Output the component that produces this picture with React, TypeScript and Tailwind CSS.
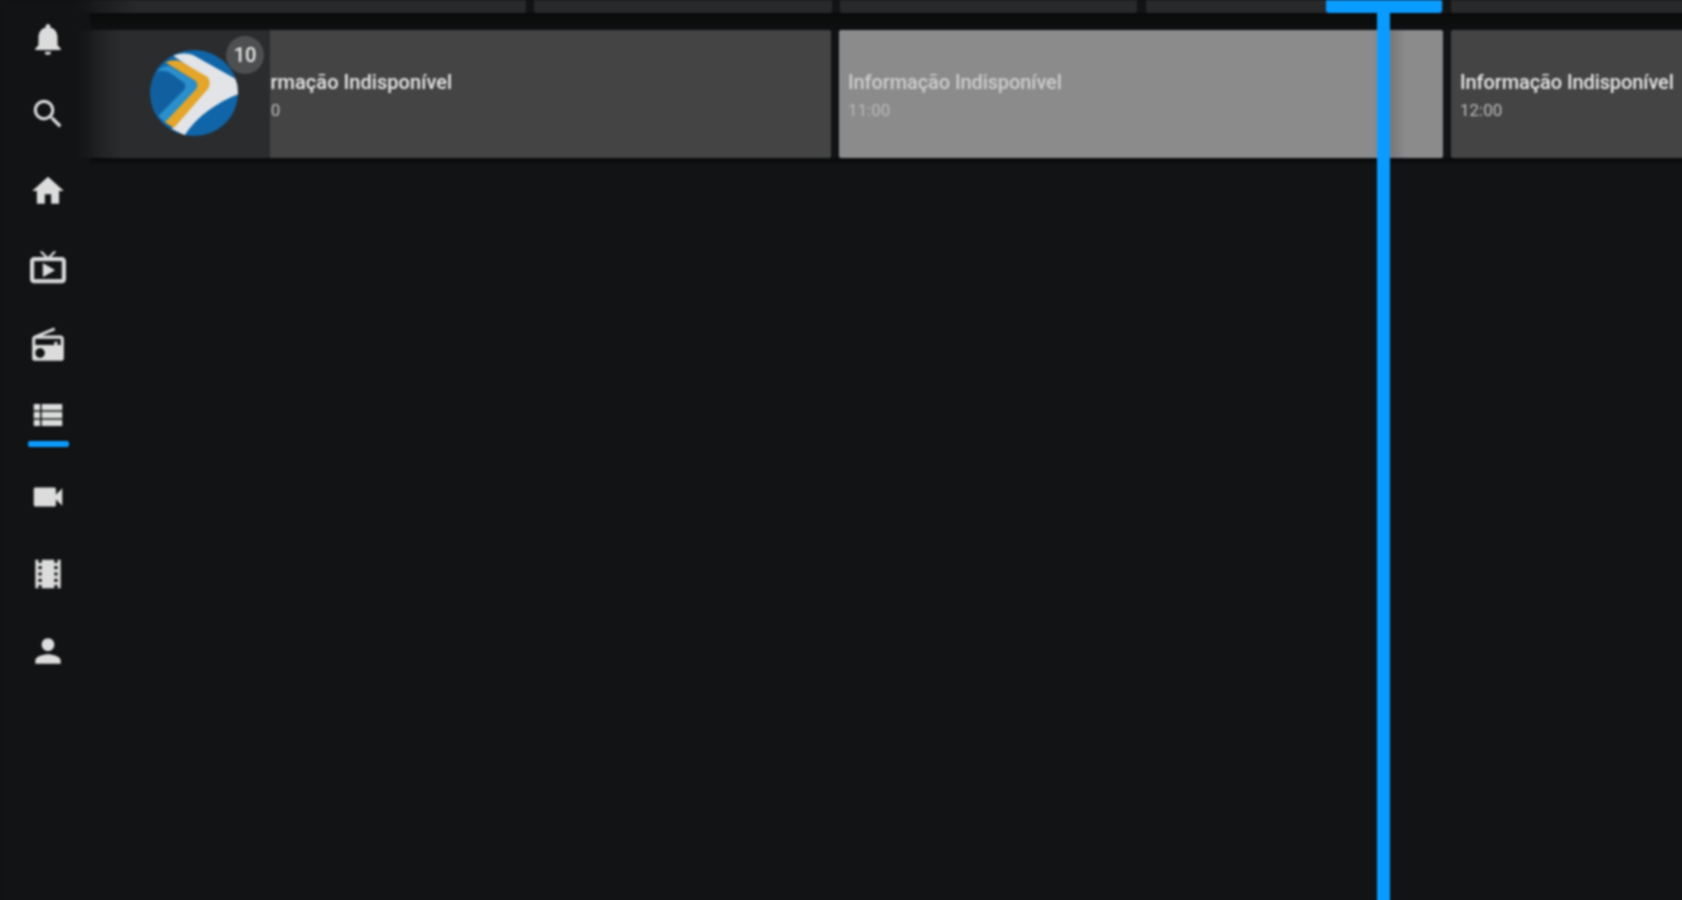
import { MdNotifications, MdSearch, MdHome, MdRadio, MdViewList, MdVideocam, MdLocalMovies, MdPerson } from "react-icons/md";

function Logo() {
  return (
    <svg viewBox="58 75 272 257" preserveAspectRatio="none" className="w-[88px] h-[86px]">
      <defs>
        <clipPath id="c"><ellipse cx="194" cy="203.5" rx="136" ry="128.5" /></clipPath>
      </defs>
      <g clipPath="url(#c)">
        <rect x="58" y="75" width="272" height="257" fill="#0f65a8" />
        <path d="M130 92 C150 84 175 82 195 92 L335 168 L335 205 C270 230 205 268 165 330 L125 310 L235 190 L238 165 Z" fill="#e2e4e8" />
        <path d="M106 112 C125 104 140 104 155 110 L236 156 C244 165 244 180 238 190 L132 308 L103 290 L200 190 C206 180 204 172 196 166 Z" fill="#e3a52a" />
        <path d="M78 138 C95 125 108 120 122 124 L196 166 C206 174 206 184 200 192 L104 292 L84 272 L165 192 C170 184 168 176 160 170 L118 142 C105 136 92 136 78 138 Z" fill="#2a8fcb" />
        <path d="M70 150 C95 138 110 140 122 148 L158 172 C165 178 165 186 160 192 L85 268 C70 250 60 225 58 200 Z" fill="#125f9f" />
      </g>
    </svg>
  );
}

function TvIcon({ size }: { size: number }) {
  return (
    <svg viewBox="0 0 24 24" width={size} height={size} fill="currentColor" stroke="currentColor" strokeWidth={0.6}>
      <path d="M21 6h-7.59l3.3-3.29L16 2l-4 4-4-4-.71.71L10.59 6H3c-1.1 0-2 .89-2 2v12c0 1.1.9 2 2 2h18c1.1 0 2-.9 2-2V8c0-1.11-.9-2-2-2zm0 14H3V8h18v12zM9 10v8l7-4z" />
    </svg>
  );
}

function Card({ time, highlighted, clipped }: { time: string; highlighted?: boolean; clipped?: boolean }) {
  return (
    <div className={`h-full flex flex-col justify-center pl-[9px] pt-[2px] rounded-[2px] ${highlighted ? "bg-[#8b8b8b] text-[#cdcdcd]" : "bg-[#444444] text-[#e6e6e6]"}`}>
      <div className={`text-[20px] leading-[28px] whitespace-nowrap font-medium ${clipped ? "ml-[-3px] tracking-[0.05px]" : "tracking-[-0.1px]"}`}>Informação Indisponível</div>
      <div className={`text-[17px] leading-[24px] mt-[2px] whitespace-nowrap ${highlighted ? "text-[#b8b8b8]" : "text-[#bdbdbd]"}`}>{time}</div>
    </div>
  );
}

const nav = [
  { I: MdNotifications, cls: "h-[74px]" },
  { I: MdSearch, cls: "h-[75px]" },
  { I: MdHome, cls: "h-[79px]" },
  { I: TvIcon, cls: "h-[73px]" },
  { I: MdRadio, cls: "h-[80px] pt-[4px]" },
];

export default function App() {
  return (
    <div className="w-[1682px] h-[900px] overflow-hidden bg-[#111315]">
      <div className="relative w-[1700px] h-[920px] overflow-hidden bg-[#111315] font-['Roboto',sans-serif] blur-[0.8px]">
        <div className="flex flex-col">
          {/* top row, cut by the window edge */}
          <div className="flex h-[13px] ml-[70px] gap-[8px]">
            <div className="w-[456px] rounded-b-[2px] bg-gradient-to-r from-[#111315] via-[#28292b] via-[15%] to-[#28292b]" />
            <div className="w-[298px] rounded-b-[2px] bg-[#28292b]" />
            <div className="w-[297px] rounded-b-[2px] bg-[#28292b]" />
            <div className="w-[297px] ml-[1px] rounded-b-[2px] bg-[#28292b]" />
            <div className="flex-1 rounded-b-[2px] bg-[#28292b]" />
          </div>
          {/* band of shadow between rows */}
          <div className="h-[17px] ml-[90px] bg-gradient-to-b from-[#090a0a] to-[#0f1011]" />
          {/* second row */}
          <div className="flex h-[128px] ml-[70px]">
            <div className="relative w-[200px] shrink-0 bg-gradient-to-r from-[#111315] via-[#2a2c2e] via-[25%] to-[#2a2c2e]">
              <div className="absolute left-[80px] top-[20px]"><Logo /></div>
              <div className="absolute left-[156px] top-[6px] w-[38px] h-[38px] rounded-full bg-[#4e4f50] text-[#e6e6e6] text-[20px] font-medium flex items-center justify-center">10</div>
            </div>
            <div className="w-[561px] shrink-0 overflow-hidden">
              <div className="ml-[-41px] h-full"><Card time="10:00" clipped /></div>
            </div>
            <div className="w-[604px] shrink-0 ml-[8px]"><Card time="11:00" highlighted /></div>
            <div className="flex-1 ml-[8px]"><Card time="12:00" /></div>
          </div>
          <div className="h-[8px] ml-[90px] bg-gradient-to-b from-[#090a0a] to-[#111315]" />
        </div>

        {/* sidebar lies over the rows */}
        <div className="absolute left-0 top-0 w-[96px] h-full flex flex-col items-center text-[#dcdcdc] pt-[2px] bg-gradient-to-r from-[#111315] from-[72%] to-transparent">
          {nav.map(({ I, cls }, i) => (
            <div key={i} className={`flex items-center justify-center shrink-0 ${cls}`}>
              <I size={38} />
            </div>
          ))}
          <div className="flex flex-col items-center h-[76px] shrink-0 pt-[13px]">
            <MdViewList size={38} />
            <div className="w-[41px] h-[6px] rounded-[2px] bg-[#0a9bff] mt-[7px]" />
          </div>
          <div className="flex items-center justify-center h-[76px] shrink-0"><MdVideocam size={38} /></div>
          <div className="flex items-center justify-center h-[77px] shrink-0"><MdLocalMovies size={38} /></div>
          <div className="flex items-center justify-center h-[77px] shrink-0"><MdPerson size={38} /></div>
        </div>

        {/* current time marker */}
        <div className="absolute top-0 left-[1326px] w-[116px] h-[13px] rounded-b-[3px] bg-[#0a9bff]" />
        <div className="absolute top-[30px] left-[1390px] w-[16px] h-[128px] bg-gradient-to-r from-[#77777a] to-transparent" />
        <div className="absolute top-0 left-[1377px] w-[13px] h-full bg-[#0a9bff]" />
      </div>
    </div>
  );
}
